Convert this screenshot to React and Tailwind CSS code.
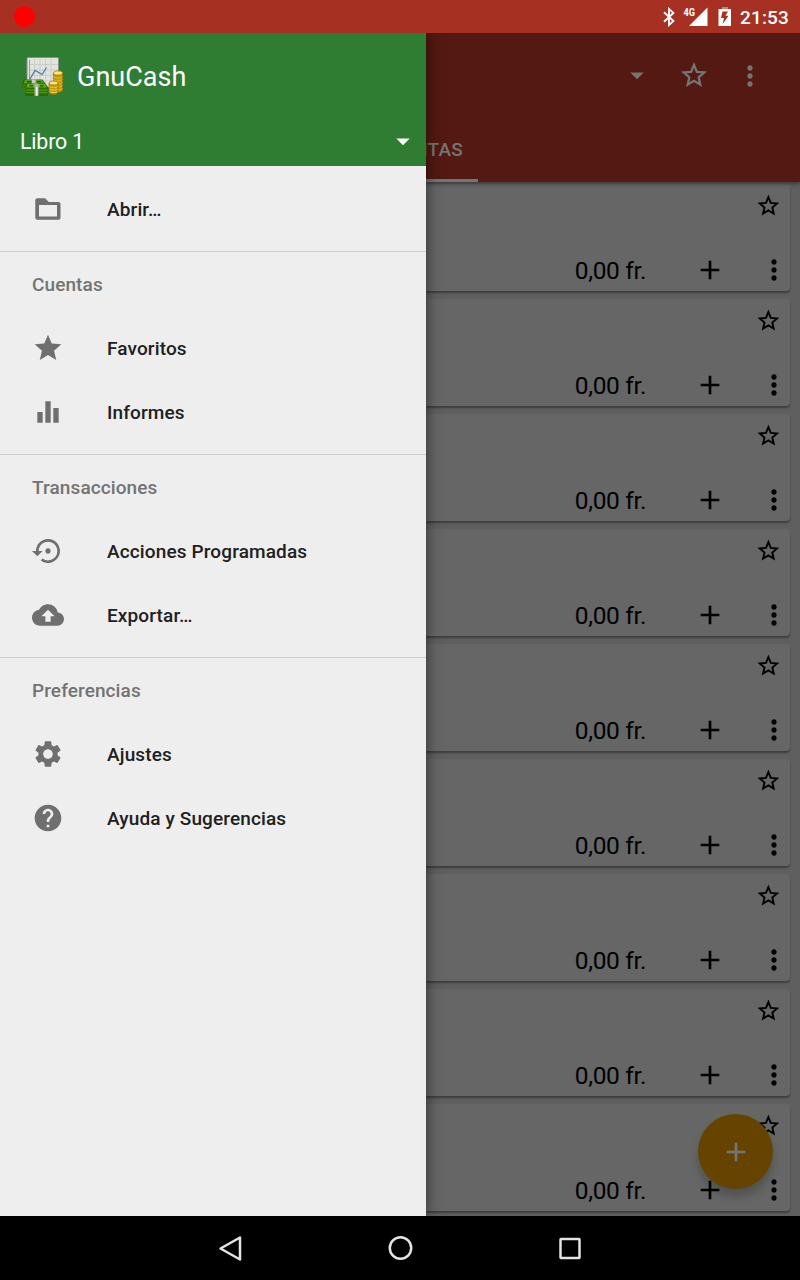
import React from "react";
import {
  MdGrade,
  MdEqualizer,
  MdSettingsBackupRestore,
  MdBackup,
  MdSettings,
  MdHelp,
  MdMoreVert,
  MdAdd,
} from "react-icons/md";

function FolderIcon({ size, className }) {
  return (
    <svg width={size} height={size} viewBox="0 0 32 32" className={className}>
      <path
        fill="currentColor"
        fillRule="evenodd"
        d="M5.300 5.300h7.900l3.500 3.700h9.800a2 2 0 0 1 2 2v13.800a2 2 0 0 1-2 2H5.300a2 2 0 0 1-2-2V7.300a2 2 0 0 1 2-2zM7 12v11.500h18V12z"
      />
    </svg>
  );
}

function StarOutline({ size, className }) {
  return (
    <svg width={size} height={size} viewBox="0 0 26 26" className={className} fill="none" stroke="currentColor" strokeWidth="1.900">
      <path d="M13.400 4.100 15.800 9.900 22 10.400 17.300 14.500 18.700 20.600 13.400 17.400 8.100 20.600 9.500 14.500 4.800 10.400 11 9.900z" />
    </svg>
  );
}

const sections = [
  { title: null, items: [{ icon: FolderIcon, label: "Abrir…" }] },
  {
    title: "Cuentas",
    items: [
      { icon: MdGrade, label: "Favoritos" },
      { icon: MdEqualizer, label: "Informes" },
    ],
  },
  {
    title: "Transacciones",
    items: [
      { icon: MdSettingsBackupRestore, label: "Acciones Programadas" },
      { icon: MdBackup, label: "Exportar…" },
    ],
  },
  {
    title: "Preferencias",
    items: [
      { icon: MdSettings, label: "Ajustes" },
      { icon: MdHelp, label: "Ayuda y Sugerencias" },
    ],
  },
];

function StatusBar() {
  return (
    <div className="flex h-[33px] shrink-0 items-center bg-[#a63122] pl-[14px] pr-[11px] text-white">
      <span className="h-[21px] w-[21px] rounded-full bg-[#ff0000]" />
      <div className="ml-auto flex h-full items-center">
        <svg width="12" height="20" viewBox="0 0 12 20" className="mr-[8px]" fill="none" stroke="#fff" strokeWidth="1.900">
          <path d="M1 5.200 10.400 14.100 6 18V2L10.400 5.900 1 14.800" />
        </svg>
        <svg width="25" height="20" viewBox="0 0 25 20" className="mr-[10px]">
          <path d="M24.500 0.500V19H6Z" fill="#fff" />
          <text x="0.500" y="9" fontSize="10.500" fontWeight="700" fontFamily="Roboto, sans-serif" fill="#fff" textLength="11.500" lengthAdjust="spacingAndGlyphs">4G</text>
        </svg>
        <svg width="14" height="20" viewBox="0 0 14 20" className="mr-[8px]">
          <path d="M4 0h6v2H4z" fill="#fff" opacity=".4" />
          <path d="M0.500 2h12.500V19H0.500z" fill="#fff" />
          <path d="M4.500 4.500 3 11H6L4.500 17.200 10.500 8.800H7.500L10 4.500z" fill="#a63122" />
        </svg>
        <span className="pt-[2px] text-[19px] font-medium leading-none tracking-[0.15px]">21:53</span>
      </div>
    </div>
  );
}

function Logo() {
  return (
    <svg width="43" height="43" viewBox="0 0 43 43">
      <rect x="6" y="2.500" width="31.500" height="30" rx="1" fill="#e2e2df" stroke="#8b8d88" />
      <path d="M13.500 4v28M19 4v28M24.500 4v28M30 4v28M8 9.500h29M8 15h29M8 20.500h29M8 26h29" stroke="#cbcdc8" strokeWidth="1" />
      <path d="M8.500 5v20" stroke="#9a9c98" />
      <path d="M9 24 14 15.500 21 19.500 25.500 12.500" fill="none" stroke="#5279ad" strokeWidth="1.300" />
      <path d="M3 24.500h18.500L24 28v6H1v-6z" fill="#2c6904" />
      <path d="M4 25h17l2 3.500H2.500z" fill="#57a01c" />
      <path d="M6 26.800h4M16 26.800h4" stroke="#245a04" strokeWidth="1.500" />
      <path d="M11 24.500h3.500v4.500H11z" fill="#c9c9c4" />
      <path d="M1.500 30.500h4M1.500 33h4" stroke="#4a9414" />
      <path d="M5.500 28.500h19L27 32v9H4.500v-9z" fill="#2c6904" />
      <path d="M6.500 29h17.500l2 3.500H5.500z" fill="#60ad20" />
      <path d="M8.500 30.800h3.500M19 30.800h3.500" stroke="#286204" strokeWidth="1.500" />
      <path d="M5 35h21.500M5 37.500h21.500" stroke="#4a9414" strokeWidth="1.300" />
      <path d="M13.500 28.500h4V41h-4z" fill="#b2b2ae" />
      <path d="M15 32h1.500v8.500H15z" fill="#f4f4f2" />
      <path d="M32.500 18v17c0 3 9 3 9 0V18z" fill="#c49a0c" stroke="#8f6903" strokeWidth=".7" />
      <path d="M32.500 21.500c1 2 8 2 9 0M32.500 24.500c1 2 8 2 9 0M32.500 27.500c1 2 8 2 9 0M32.500 30.500c1 2 8 2 9 0M32.500 33.500c1 2 8 2 9 0" stroke="#dfbd35" fill="none" />
      <ellipse cx="37" cy="18" rx="4.500" ry="2.100" fill="#fbe779" stroke="#a67c08" strokeWidth=".8" />
      <path d="M28 28v9c0 3.200 9 3.200 9 0v-9z" fill="#c79d0d" stroke="#8f6903" strokeWidth=".7" />
      <path d="M28.500 31.500c1 1.500 7 1.500 8 0M28.500 34c1 1.500 7 1.500 8 0M28.500 36.500c1 1.500 7 1.500 8 0" stroke="#e8c83f" fill="none" />
      <ellipse cx="32.500" cy="28" rx="4.500" ry="2" fill="#fbe779" stroke="#a67c08" strokeWidth=".8" />
    </svg>
  );
}

function Caret({ className }) {
  return (
    <svg width="14" height="8" viewBox="0 0 14 8" className={className}>
      <path d="M0.300 0.500h13.400L7 7.200z" fill="currentColor" />
    </svg>
  );
}

function Drawer() {
  return (
    <aside className="z-10 flex w-[426px] shrink-0 flex-col bg-[#eeeeee] shadow-[0_0_14px_rgba(0,0,0,0.55)]">
      <header className="flex h-[133px] shrink-0 flex-col bg-[#2e7d32] text-white">
        <div className="flex h-[86px] items-center gap-[13px] pl-[21px]">
          <Logo />
          <span className="pt-[2px] text-[27px] leading-none">GnuCash</span>
        </div>
        <div className="flex h-[45px] items-center justify-between pl-5 pr-4">
          <span className="pt-px text-[21.33px] leading-none tracking-[-0.15px]">Libro 1</span>
          <Caret />
        </div>
      </header>
      <nav className="flex flex-col pt-[11px] text-[19px] font-medium">
        {sections.map((section, i) => (
          <section
            key={i}
            className={i < sections.length - 1 ? "border-b border-[#cecece] pb-[10px]" : ""}
          >
            {section.title && (
              <h2 className="flex h-16 items-center pl-8 pt-[2px] tracking-[0.1px] text-[#737373]">
                {section.title}
              </h2>
            )}
            {section.items.map(({ icon: Icon, label }) => (
              <a key={label} className="flex h-16 items-center pl-8 text-[#202020]">
                <Icon size={32} className="mr-[43px] text-[#6f6f6f]" />
                <span className="pt-[2px] tracking-[0.13px]">{label}</span>
              </a>
            ))}
          </section>
        ))}
      </nav>
    </aside>
  );
}

function AccountCard() {
  return (
    <article className="flex h-[107px] shrink-0 flex-col justify-between rounded-r-[4px] bg-[#666666] shadow-[0_2px_2px_rgba(0,0,0,0.35)]">
      <div className="flex justify-end pr-[9px] pt-[9px]">
        <StarOutline size={26} />
      </div>
      <div className="flex h-[42px] items-center justify-end">
        <span className="mr-[48px] pt-[2px] text-[24.5px] leading-none tracking-[-0.35px]">
          0,00 fr.
        </span>
        <MdAdd size={32} className="mr-8" />
        <MdMoreVert size={32} />
      </div>
    </article>
  );
}

function Accounts() {
  return (
    <main className="relative flex min-w-0 flex-1 flex-col overflow-hidden bg-[#5f5f5f] text-black">
      <header className="z-[1] flex h-[149px] shrink-0 flex-col justify-between bg-[#531912] text-[#757575] shadow-[0_2px_4px_rgba(0,0,0,0.4)]">
        <div className="flex h-[86px] items-center justify-end pb-px pr-[34px]">
          <Caret className="mr-[34px]" />
          <StarOutline size={31} className="mr-[25px]" />
          <MdMoreVert size={32} />
        </div>
        <div className="flex h-[63px] w-[52px] items-center justify-end border-b-[3px] border-[#757575] pr-[15px] pt-[3px] text-[19px] font-medium tracking-[0.2px]">
          CUENTAS
        </div>
      </header>
      <div className="flex flex-col gap-2 pr-[10px] pt-[2px]">
        {Array.from({ length: 9 }, (_, i) => (
          <AccountCard key={i} />
        ))}
      </div>
      <button className="absolute bottom-[27px] right-[27px] flex h-[75px] w-[75px] items-center justify-center rounded-full bg-[#664400] text-[#757575] shadow-[0_8px_9px_rgba(0,0,0,0.2)]">
        <MdAdd size={32} />
      </button>
    </main>
  );
}

function NavigationBar() {
  return (
    <footer className="flex h-16 shrink-0 items-center justify-center gap-[138px] bg-black">
      {[
        <path key="b" d="M26 5.500v22L6.500 16.500z" />,
        <circle key="h" cx="16.500" cy="16" r="10.700" />,
        <rect key="r" x="6.500" y="7" width="19" height="19" rx=".5" />,
      ].map((shape, i) => (
        <svg
          key={i}
          width="32"
          height="32"
          viewBox="0 0 32 32"
          fill="none"
          stroke="#e4e4e4"
          strokeWidth="2.500"
          strokeLinejoin="round"
        >
          {shape}
        </svg>
      ))}
    </footer>
  );
}

export default function App() {
  return (
    <div className="flex h-[1280px] w-[800px] flex-col overflow-hidden font-[Roboto,sans-serif]">
      <StatusBar />
      <div className="flex min-h-0 flex-1 overflow-hidden">
        <Drawer />
        <Accounts />
      </div>
      <NavigationBar />
    </div>
  );
}
